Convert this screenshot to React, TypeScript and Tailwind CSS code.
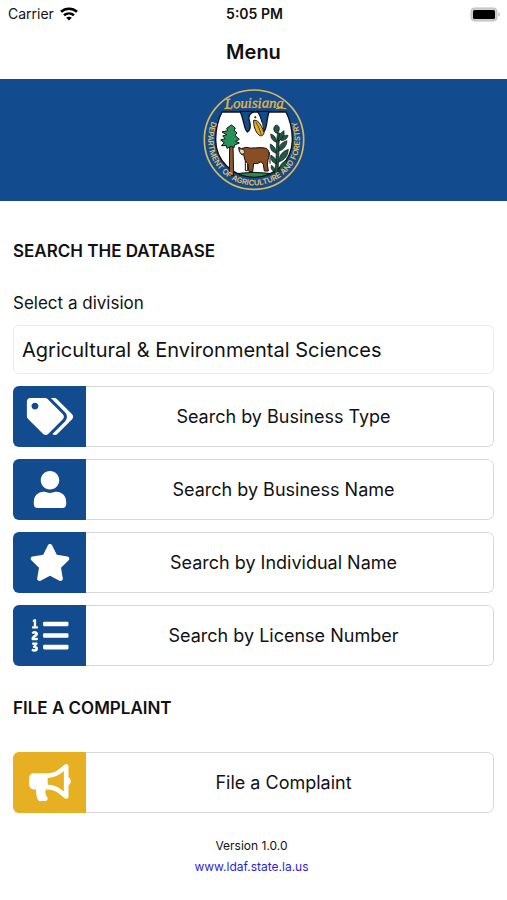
import React, { useState } from 'react';
import { FaBullhorn, FaListOl, FaStar, FaTags, FaUser } from 'react-icons/fa';
import type { IconType } from 'react-icons';

interface MenuItem {
  label: string;
  icon: IconType;
}

const searchItems: MenuItem[] = [
  { label: 'Search by Business Type', icon: FaTags },
  { label: 'Search by Business Name', icon: FaUser },
  { label: 'Search by Individual Name', icon: FaStar },
  { label: 'Search by License Number', icon: FaListOl },
];

const StatusBar: React.FC = () => (
  <div className="grid h-7 grid-cols-3 items-center pl-2 pr-1.5 text-sm">
    <div className="flex items-center gap-1.5">
      <span>Carrier</span>
      <svg viewBox="0 0 18 14" className="h-3.5 w-[18px]" fill="none" stroke="#000" strokeWidth="2.6">
        <path d="M1 4.8C5.5.7 12.5.7 17 4.8" />
        <path d="M4 8.3c2.9-2.5 7.1-2.5 10 0" />
        <path d="M9 13.5 6.2 10.8c1.6-1.4 4-1.4 5.6 0Z" fill="#000" stroke="none" />
      </svg>
    </div>
    <span className="text-center font-semibold">5:05 PM</span>
    <svg viewBox="0 0 31 15" className="h-[15px] w-[31px] justify-self-end">
      <rect x="1" y="1" width="26" height="13" rx="3.5" fill="#d0d0d0" stroke="#bdbdbd" />
      <rect x="3" y="3" width="22" height="9" rx="1.5" fill="#000" />
      <path d="M28.5 5.3c1.8.6 1.8 3.800 0 4.400Z" fill="#b5b5b5" />
    </svg>
  </div>
);

const Seal: React.FC = () => (
  <svg
    viewBox="0 0 360 360"
    className="size-30"
    role="img"
    aria-label="Louisiana Department of Agriculture and Forestry"
  >
    <defs>
      <path id="ring" d="M60 110A138 138 0 1 0 300 110" />
      <path id="banner" d="M80 87Q180 80 282 85" />
      <clipPath id="inner">
        <path d="M84 96H276Q294 130 295 179A115 113 0 0 1 65 179Q66 130 84 96Z" />
      </clipPath>
    </defs>
    <circle cx="180" cy="179" r="149" fill="#134b8f" stroke="#d8b85a" strokeWidth="5" />
    {/* scene */}
    <g clipPath="url(#inner)">
      <rect x="60" y="90" width="240" height="210" fill="#fff" />
      <path d="M70 292Q180 262 290 292V310H70Z" fill="#2c8a4b" stroke="#111" strokeWidth="3" />
    </g>
    <path
      d="M84 96H276Q294 130 295 179A115 113 0 0 1 65 179Q66 130 84 96Z"
      fill="none"
      stroke="#111"
      strokeWidth="4"
    />
    {/* sky either side of the pelican's neck */}
    <path d="M138 94H181C168 99 162 108 166 121C171 137 169 150 160 156C149 146 150 116 138 94Z" fill="#134b8f" stroke="#111" strokeWidth="4" />
    <path d="M190 94H226C217 112 221 143 210 155C202 141 206 112 190 94Z" fill="#134b8f" stroke="#111" strokeWidth="4" />
    {/* pelican */}
    <path d="M172 128C168 111 176 102 187 103C198 106 198 119 204 130L208 150L196 168L182 150Z" fill="#fff" />
    <path d="M179 121C190 119 200 128 210 158C208 167 202 170 195 165C184 156 178 136 179 121Z" fill="#e5b12d" stroke="#111" strokeWidth="3" />
    <path d="M185 125C192 138 198 150 202 164" fill="none" stroke="#111" strokeWidth="2" />
    <circle cx="184" cy="112" r="3" fill="#111" />
    {/* pine tree */}
    <path d="M107 195H117L119 287H106Z" fill="#8b5a33" stroke="#111" strokeWidth="3" />
    <path
      d="M112 135Q118 139 124 144L120 151L129 159L123 166L136 178L125 184L136 189L122 195L120 203L112 199L99 205L97 197L82 197L91 188L80 180L94 176L86 168L98 164L84 156L101 152L98 145Z"
      fill="#26915a"
      stroke="#111"
      strokeWidth="3"
      strokeLinejoin="round"
    />
    {/* cow */}
    <path
      d="M134 202L142 206L156 202C172 208 195 200 212 204C227 206 227 222 222 240L220 252L223 273H211L208 253L201 245C192 252 184 251 179 250L176 275H165L161 250C154 246 151 238 150 226L142 223L136 214Z"
      fill="#8a4e24"
      stroke="#111"
      strokeWidth="3"
      strokeLinejoin="round"
    />
    <path d="M137 206L149 209L152 218L144 223L137 216Z" fill="#e9d9c2" stroke="#111" strokeWidth="2" />
    <path d="M154 243V272H161V252M225 216C229 226 228 240 228 251" fill="none" stroke="#111" strokeWidth="3" />
    {/* sugar cane */}
    <g fill="#1b5a45" stroke="#111" strokeWidth="2" strokeLinejoin="round">
      <path d="M243 137C257 130 260 151 250 160C239 158 236 145 243 137Z" />
      <path d="M251 158C244 200 250 240 240 286H250C258 240 252 200 258 160Z" />
      <path d="M248 187Q230 182 230 162Q246 166 248 187Z" />
      <path d="M252 184Q252 162 270 152Q274 174 252 184Z" />
      <path d="M262 176Q266 164 282 166Q280 180 262 182Z" />
      <path d="M247 220Q226 214 229 192Q246 200 247 220Z" />
      <path d="M253 214Q254 188 279 182Q278 206 253 214Z" />
      <path d="M248 252Q228 246 231 226Q248 234 248 252Z" />
      <path d="M254 246Q256 216 283 208Q282 238 254 246Z" />
      <path d="M254 276Q256 248 279 240Q278 264 254 276Z" />
      <path d="M243 276Q228 270 232 256Q244 262 243 276Z" />
    </g>
    <g fill="#e5c36a">
      <text fontFamily="Inter, sans-serif" fontSize="23" fontWeight="600">
        <textPath href="#ring" startOffset="50%" textAnchor="middle">
          DEPARTMENT OF AGRICULTURE AND FORESTRY
        </textPath>
      </text>
      <text fontFamily="'Liberation Serif', serif" fontSize="44" fontStyle="italic" fill="#e5b93a" stroke="#e5b93a">
        <textPath href="#banner" startOffset="50%" textAnchor="middle">
          Louisiana
        </textPath>
      </text>
    </g>
    <path d="M91 86Q99 80 112 87M246 86Q259 82 277 86" fill="none" stroke="#e5b93a" strokeWidth="3" />
  </svg>
);

const MenuButton: React.FC<{ item: MenuItem; accent?: boolean }> = ({ item, accent }) => {
  const Icon = item.icon;
  return (
    <button
      type="button"
      className="flex h-[61px] w-full overflow-hidden rounded-md bg-white text-lg"
    >
      <span
        className={
          accent
            ? 'flex h-full w-[73px] items-center justify-center bg-[#e6b022] text-white'
            : 'flex h-full w-[73px] items-center justify-center bg-[#134b8f] text-white'
        }
      >
        <Icon className="h-[37px] w-12" />
      </span>
      <span className="flex h-full flex-1 items-center justify-center rounded-r-md border border-l-0 border-[#d8d8da] pr-3">
        {item.label}
      </span>
    </button>
  );
};

const App: React.FC = () => {
  const [division, setDivision] = useState('Agricultural & Environmental Sciences');

  return (
    <div className="min-h-screen bg-white font-['Inter',sans-serif] text-[#111]">
      <StatusBar />
      <header>
        <h1 className="pt-2 pb-[11px] text-center text-xl leading-8 font-semibold">Menu</h1>
        <div className="flex h-[122px] items-center justify-center bg-[#134b8f]">
          <Seal />
        </div>
      </header>

      <main className="px-[13px] pt-9">
        <h2 className="text-[17px] leading-7 font-semibold">SEARCH THE DATABASE</h2>
        <label htmlFor="division" className="mt-6 block text-[17px] leading-7">
          Select a division
        </label>
        <select
          id="division"
          value={division}
          onChange={(e) => setDivision(e.target.value)}
          className="mt-2 block h-[49px] w-full appearance-none rounded-md border border-[#ececee] bg-white px-2 text-xl"
        >
          <option>Agricultural &amp; Environmental Sciences</option>
        </select>
        <div className="mt-3 flex flex-col gap-3">
          {searchItems.map((item) => (
            <MenuButton key={item.label} item={item} />
          ))}
        </div>

        <h2 className="mt-7 text-[17px] leading-7 font-semibold">FILE A COMPLAINT</h2>
        <div className="mt-[30px]">
          <MenuButton item={{ label: 'File a Complaint', icon: FaBullhorn }} accent />
        </div>
      </main>

      <footer className="mt-[22px] flex flex-col items-center pr-1 text-xs leading-[21px]">
        <p>Version 1.0.0</p>
        <a href="#" className="text-[#2a1fe0]">
          www.ldaf.state.la.us
        </a>
      </footer>
    </div>
  );
};

export default App;
